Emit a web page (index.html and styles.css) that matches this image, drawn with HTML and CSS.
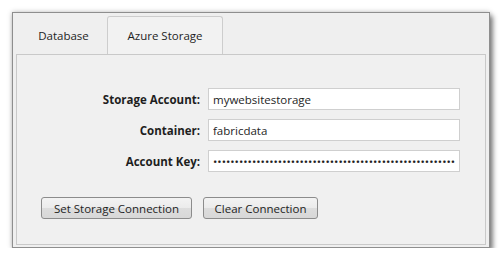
FILE: index.html
```html
<!DOCTYPE html>
<html lang="en">
  <head>
    <meta charset="UTF-8" />
    <title>Storage Settings</title>
    <link rel="stylesheet" href="styles.css">
  </head>
  <body>
    <div class="window">
      <div class="tabs">
        <div class="tab">Database</div>
        <div class="tab active">Azure Storage</div>
      </div>

      <div class="panel">
        <form class="settings">
          <label for="account">Storage Account:</label>
          <input type="text" id="account" value="mywebsitestorage" />
          <label for="container">Container:</label>
          <input type="text" id="container" value="fabricdata" />
          <label for="key">Account Key:</label>
          <input type="password" id="key" value="xxxxxxxxxxxxxxxxxxxxxxxxxxxxxxxxxxxxxxxxxxxxxxxxxxxxxxxxxxxx" />
        </form>

        <div class="actions">
          <button type="button" class="set-btn">Set Storage Connection</button>
          <button type="button" class="clear-btn">Clear Connection</button>
        </div>
      </div>
    </div>
  </body>
</html>
```

FILE: styles.css
```css
body {
  margin: 0;
  background: #fff;
  font-family: "Open Sans", "Noto Sans", sans-serif;
  font-size: 11.5px;
  color: #1e1e1e;
}

.window {
  margin: 12px 0 0 12px;
  padding: 3px 3px 2px 3px;
  width: 470px;
  height: 229px;
  background: #efefef;
  border: 1px solid #8e8e8e;
  box-shadow: 0 0 5px rgba(0, 0, 0, 0.25), 3px 4px 5px rgba(0, 0, 0, 0.45);
}

.tabs {
  display: flex;
  height: 38px;
}

.tab {
  display: flex;
  align-items: center;
  justify-content: center;
  height: 38px;
  box-sizing: border-box;
}

.tab:first-child {
  width: 91px;
  padding-left: 4px;
}

.tab.active {
  width: 116px;
  background: #f2f2f2;
  border: 1px solid #cdcdcd;
  border-bottom: none;
  border-radius: 3px 3px 0 0;
}

.panel {
  height: 189px;
  border: 1px solid #c9c9c9;
  background: #f0f0f0;
}

.settings {
  display: grid;
  grid-template-columns: 183px 252px;
  column-gap: 8px;
  row-gap: 9px;
  align-items: center;
  padding-top: 33px;
}

.settings label {
  text-align: right;
  font-weight: bold;
}

.settings input {
  height: 22px;
  box-sizing: border-box;
  margin: 0;
  padding: 0 4px;
  border: 1px solid #cfcfcf;
  background: #fff;
  font-family: inherit;
  font-size: 11.5px;
  color: #1e1e1e;
  outline: none;
}

.actions {
  display: flex;
  gap: 11px;
  margin: 25px 0 0 24px;
}

button {
  height: 22px;
  margin: 0;
  padding: 0;
  border: 1px solid #8c8c8c;
  border-radius: 3px;
  background: linear-gradient(#f3f3f3, #ebebeb 50%, #dddddd 51%, #d8d8d8);
  font-family: inherit;
  font-size: 11.5px;
  color: #1e1e1e;
}

.set-btn {
  width: 151px;
}

.clear-btn {
  width: 115px;
}
```
